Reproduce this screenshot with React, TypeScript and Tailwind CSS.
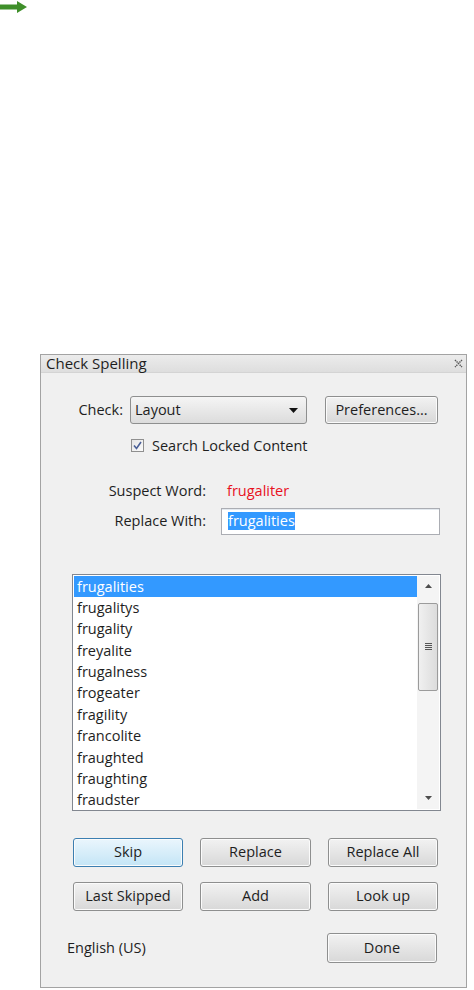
import React from 'react'

const words = [
  'frugalities',
  'frugalitys',
  'frugality',
  'freyalite',
  'frugalness',
  'frogeater',
  'fragility',
  'francolite',
  'fraughted',
  'fraughting',
  'fraudster',
]

const font = { fontFamily: '"Open Sans", "Noto Sans", sans-serif' }

const Btn = ({ label, primary, className = '' }: { label: string; primary?: boolean; className?: string }) => (
  <button
    className={`h-[29px] rounded-[3px] border text-[14.5px] text-[#1e1e1e] shadow-[inset_0_0_0_1px_#fbfbfb] ${
      primary
        ? 'border-[#3c7fb1] bg-gradient-to-b from-[#eaf6fd] to-[#c4e5f6]'
        : 'border-[#8e8f8f] bg-gradient-to-b from-[#f2f2f2] to-[#d8d8d8]'
    } ${className}`}
  >
    {label}
  </button>
)

export default function App() {
  return (
    <div className="min-h-[990px] w-[474px] bg-white" style={font}>
      <svg width="28" height="14" viewBox="0 0 28 14" className="block">
        <path d="M0 4.5h17V1l10 6-10 6V9.5H0z" fill="#3f8f2a" />
      </svg>

      <div className="ml-[40px] mt-[340px] h-[634px] w-[427px] border border-[#a3a3a3] bg-[#f0f0f0]">
        {/* title bar */}
        <div className="flex h-[18px] items-center justify-between border-b border-[#d4d4d4] bg-gradient-to-b from-[#ececec] to-[#dedede] pl-[5px] pr-[3px]">
          <span className="text-[15px] leading-none text-[#1e1e1e]">Check Spelling</span>
          <svg width="9" height="9" viewBox="0 0 9 9">
            <path d="M1 1l7 7M8 1L1 8" stroke="#555" strokeWidth="1.4" strokeDasharray="1.4 0.8" />
          </svg>
        </div>

        {/* check row */}
        <div className="mt-[23px] flex items-center">
          <span className="w-[82px] text-right text-[14.5px] text-[#1e1e1e]">Check:</span>
          <div className="ml-[7px] flex h-[28px] w-[177px] items-center justify-between rounded-[3px] border border-[#8e8f8f] bg-gradient-to-b from-[#f5f5f5] to-[#dcdcdc] pl-[4px] pr-[8px]">
            <span className="text-[14.5px] text-[#1e1e1e]">Layout</span>
            <svg width="9" height="5" viewBox="0 0 9 5">
              <path d="M0 0h9L4.5 5z" fill="#111" />
            </svg>
          </div>
          <Btn label="Preferences..." className="ml-[18px] !h-[28px] w-[113px]" />
        </div>

        {/* checkbox */}
        <div className="mt-[11px] flex items-center pl-[90px]">
          <div className="flex h-[13px] w-[13px] items-center justify-center border border-[#8f8f8f] bg-gradient-to-br from-[#e5e5e5] to-[#fbfbfb]">
            <svg width="9" height="9" viewBox="0 0 9 9">
              <path d="M1 4.5l2.5 3L8 1" stroke="#4a5f97" strokeWidth="1.6" fill="none" />
            </svg>
          </div>
          <span className="ml-[8px] text-[14.5px] text-[#1e1e1e]">Search Locked Content</span>
        </div>

        {/* suspect word */}
        <div className="mt-[23px] flex items-center">
          <span className="w-[165px] text-right text-[14.5px] text-[#1e1e1e]">Suspect Word:</span>
          <span className="ml-[21px] text-[14.5px] text-[#e8101e]">frugaliter</span>
        </div>

        {/* replace with */}
        <div className="mt-[6px] flex items-center">
          <span className="w-[165px] text-right text-[14.5px] text-[#1e1e1e]">Replace With:</span>
          <div className="ml-[15px] flex h-[27px] w-[219px] items-center border border-[#abadb3] bg-white pl-[6px] shadow-[inset_0_1px_0_#e3e9ef]">
            <span className="bg-[#3399ff] text-[14.5px] leading-[18px] text-white">frugalities</span>
          </div>
        </div>

        {/* suggestions list */}
        <div className="ml-[31px] mt-[39px] flex h-[237px] w-[369px] border border-[#828790] bg-white p-[1px]">
          <div className="flex-1">
            {words.map((w, i) => (
              <div
                key={w}
                className={`h-[21.4px] pl-[3px] text-[14.5px] leading-[21.4px] ${
                  i === 0 ? 'bg-[#3399ff] text-white' : 'text-[#1e1e1e]'
                }`}
              >
                {w}
              </div>
            ))}
          </div>
          <div className="flex w-[22px] flex-col items-center bg-[#f4f4f4]">
            <div className="flex h-[21px] w-full items-center justify-center">
              <svg width="7" height="4" viewBox="0 0 7 4">
                <path d="M0 4L3.5 0 7 4z" fill="#4d4d4d" />
              </svg>
            </div>
            <div className="mt-[6px] flex h-[88px] w-[20px] items-center justify-center rounded-[2px] border border-[#9b9b9b] bg-gradient-to-r from-[#f0f0f0] to-[#dcdcdc]">
              <div className="flex flex-col gap-[1px]">
                <div className="h-[1px] w-[7px] bg-[#555]" />
                <div className="h-[1px] w-[7px] bg-[#555]" />
                <div className="h-[1px] w-[7px] bg-[#555]" />
                <div className="h-[1px] w-[7px] bg-[#555]" />
              </div>
            </div>
            <div className="flex-1" />
            <div className="flex h-[21px] w-full items-center justify-center">
              <svg width="7" height="4" viewBox="0 0 7 4">
                <path d="M0 0h7L3.5 4z" fill="#4d4d4d" />
              </svg>
            </div>
          </div>
        </div>

        {/* buttons */}
        <div className="ml-[32px] mt-[27px] grid w-[365px] grid-cols-[110px_111px_110px] gap-x-[17px] gap-y-[15px]">
          <Btn label="Skip" primary />
          <Btn label="Replace" />
          <Btn label="Replace All" />
          <Btn label="Last Skipped" />
          <Btn label="Add" />
          <Btn label="Look up" />
        </div>

        <div className="mt-[22px] flex items-center justify-between pl-[26px] pr-[29px]">
          <span className="text-[14.5px] text-[#1e1e1e]">English (US)</span>
          <Btn label="Done" className="w-[110px] !h-[30px]" />
        </div>
      </div>
    </div>
  )
}
